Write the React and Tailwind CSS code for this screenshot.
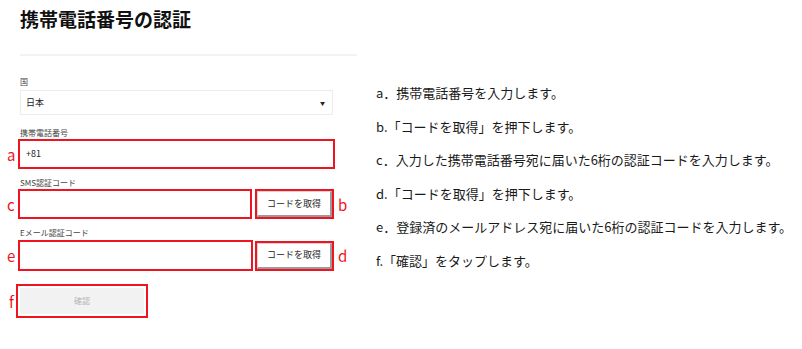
const FONT = { fontFamily: '"Noto Sans CJK JP", "Noto Sans", sans-serif' };

const STEPS = [
  'a．携帯電話番号を入力します。',
  'b.「コードを取得」を押下します。',
  'c．入力した携帯電話番号宛に届いた6桁の認証コードを入力します。',
  'd.「コードを取得」を押下します。',
  'e．登録済のメールアドレス宛に届いた6桁の認証コードを入力します。',
  'f.「確認」をタップします。',
];

function Mark({ children, className = '' }) {
  return (
    <span className={`text-[15px] leading-none text-[#ee1420] ${className}`}>{children}</span>
  );
}

function Label({ children, className = '' }) {
  return <div className={`text-[8px] leading-[10px] text-[#444] ${className}`}>{children}</div>;
}

function CodeButton() {
  return (
    <div className="flex h-[30px] w-[79px] border-2 border-[#ee1420]">
      <button className="flex flex-1 items-center justify-center border border-[#d6d6d6] border-r-2 border-b-2 border-r-[#9a9a9a] border-b-[#9a9a9a] bg-white text-[9px] text-[#222]">
        コードを取得
      </button>
    </div>
  );
}

export default function App() {
  return (
    <div className="flex h-[349px] w-[802px] bg-white" style={FONT}>
      <div className="w-[357px] shrink-0 pl-[20px] pt-[9px]">
        <h1 className="text-[19px] font-bold leading-[20px] text-[#111]">携帯電話番号の認証</h1>
        <div className="mt-[25px] h-[2px] w-[337px] bg-[#f3f3f3]" />

        <Label className="mt-[21px]">国</Label>
        <div className="mt-[3px] flex h-[25px] w-[313px] items-center justify-between border border-[#ececec] pl-[5px] pr-[7px] text-[9px] text-[#222]">
          <span>日本</span>
          <span className="text-[5px] leading-none">▼</span>
        </div>

        <Label className="mt-[13px]">携帯電話番号</Label>
        <div className="-ml-[14px] mt-[1px] flex items-center">
          <Mark className="w-[12px] pl-[1px]">a</Mark>
          <div className="flex h-[30px] w-[317px] items-center border-2 border-[#ee1420] pl-[6px] text-[9px] text-[#222]">
            +81
          </div>
        </div>

        <Label className="mt-[9px]">SMS認証コード</Label>
        <div className="-ml-[14px] mt-[1px] flex items-center">
          <Mark className="w-[12px] pl-[1px]">c</Mark>
          <div className="h-[30px] w-[234px] border-2 border-[#ee1420]" />
          <div className="ml-[3px]">
            <CodeButton />
          </div>
          <Mark className="ml-[4px]">b</Mark>
        </div>

        <Label className="mt-[9px]">Eメール認証コード</Label>
        <div className="-ml-[14px] mt-[2px] flex items-center">
          <Mark className="w-[12px] pl-[1px]">e</Mark>
          <div className="h-[31px] w-[235px] border-2 border-[#ee1420]" />
          <div className="ml-[2px]">
            <CodeButton />
          </div>
          <Mark className="ml-[4px]">d</Mark>
        </div>

        <div className="-ml-[14px] mt-[13px] flex items-center">
          <Mark className="w-[10px] pl-[3px]">f</Mark>
          <div className="flex h-[34px] w-[132px] border-2 border-[#ee1420] p-[2px]">
            <div className="flex flex-1 items-center justify-center bg-[#f2f2f2] text-[8px] text-[#b5b5b5]">
              確認
            </div>
          </div>
        </div>
      </div>

      <div className="flex flex-col gap-[13.5px] pl-[19px] pt-[83px] text-[13px] leading-[20px] text-[#1a1a1a]">
        {STEPS.map((s) => (
          <div key={s} className="whitespace-nowrap">{s}</div>
        ))}
      </div>
    </div>
  );
}
